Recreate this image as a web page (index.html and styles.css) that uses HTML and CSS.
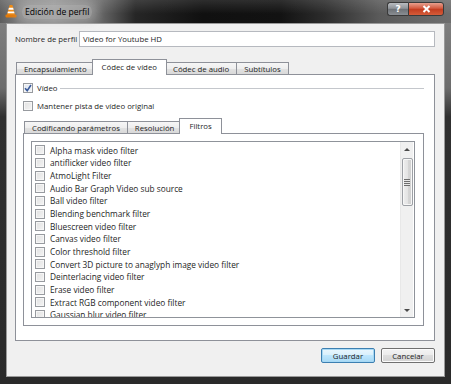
FILE: index.html
```html
<!DOCTYPE html>
<html lang="es">
<head>
<meta charset="utf-8">
<title>Edición de perfil</title>
<link rel="stylesheet" href="styles.css">
</head>
<body>
<div class="window">
  <header class="titlebar">
    <svg class="app-icon" width="12" height="14" viewBox="0 0 12 14">
      <path d="M4.6 1 L7.4 1 L10 11 L2 11 Z" fill="#f28c12"/>
      <path d="M3.9 3.8 L8.1 3.8 L8.6 5.8 L3.4 5.8 Z" fill="#fff"/>
      <path d="M2.9 7.6 L9.1 7.6 L9.5 9.3 L2.5 9.3 Z" fill="#fff"/>
      <rect x="0.5" y="10.4" width="11" height="3.1" rx="1" fill="#e07a0c"/>
    </svg>
    <span class="title">Edición de perfil</span>
    <div class="caption-buttons">
      <span class="cap-btn help">?</span>
      <span class="cap-btn close">
        <svg width="9" height="8" viewBox="0 0 9 8"><path d="M1.5 1 L7.5 7 M7.5 1 L1.5 7" stroke="#fff" stroke-width="2"/></svg>
      </span>
    </div>
  </header>
  <div class="frame">
    <main class="client">
      <div class="name-row">
        <label class="name-label">Nombre de perfil</label>
        <div class="textbox">Video for Youtube HD</div>
      </div>

      <section class="tabs outer">
        <nav class="tabbar">
          <span class="tab">Encapsulamiento</span>
          <span class="tab active">Códec de vídeo</span>
          <span class="tab">Códec de audio</span>
          <span class="tab">Subtítulos</span>
        </nav>
        <div class="pane outer-pane">
          <div class="group-head">
            <span class="checkbox checked"><svg width="8" height="8" viewBox="0 0 8 8"><path d="M1 4.2 L3.2 6.6 L7 1" fill="none" stroke="#3a5a9a" stroke-width="1.6"/></svg></span>
            <span class="check-label">Vídeo</span>
            <span class="group-line"></span>
          </div>
          <div class="check-row">
            <span class="checkbox"></span>
            <span class="check-label">Mantener pista de vídeo original</span>
          </div>

          <section class="tabs inner">
            <nav class="tabbar">
              <span class="tab">Codificando parámetros</span>
              <span class="tab">Resolución</span>
              <span class="tab active">Filtros</span>
            </nav>
            <div class="pane inner-pane">
              <div class="listbox">
                <ul class="items">
                  <li><span class="checkbox"></span>Alpha mask video filter</li>
                  <li><span class="checkbox"></span>antiflicker video filter</li>
                  <li><span class="checkbox"></span>AtmoLight Filter</li>
                  <li><span class="checkbox"></span>Audio Bar Graph Video sub source</li>
                  <li><span class="checkbox"></span>Ball video filter</li>
                  <li><span class="checkbox"></span>Blending benchmark filter</li>
                  <li><span class="checkbox"></span>Bluescreen video filter</li>
                  <li><span class="checkbox"></span>Canvas video filter</li>
                  <li><span class="checkbox"></span>Color threshold filter</li>
                  <li><span class="checkbox"></span>Convert 3D picture to anaglyph image video filter</li>
                  <li><span class="checkbox"></span>Deinterlacing video filter</li>
                  <li><span class="checkbox"></span>Erase video filter</li>
                  <li><span class="checkbox"></span>Extract RGB component video filter</li>
                  <li><span class="checkbox"></span>Gaussian blur video filter</li>
                </ul>
                <div class="scrollbar">
                  <span class="arrow up"></span>
                  <div class="track">
                    <span class="thumb"><span class="grip"></span></span>
                  </div>
                  <span class="arrow down"></span>
                </div>
              </div>
            </div>
          </section>
        </div>
      </section>

      <footer class="buttons">
        <button class="btn default">Guardar</button>
        <button class="btn">Cancelar</button>
      </footer>
    </main>
  </div>
</div>
</body>
</html>
```

FILE: styles.css
```css
* { box-sizing: border-box; }

html, body {
  margin: 0;
  padding: 0;
  background: #1b1b1b;
}

body {
  font-family: "Open Sans", "Noto Sans", sans-serif;
  color: #1e1e1e;
}

.window {
  width: 451px;
  height: 384px;
  display: flex;
  flex-direction: column;
  overflow: hidden;
  background: #2a2a2a;
}

/* ---------- title bar ---------- */
.titlebar {
  height: 23px;
  flex: none;
  display: flex;
  align-items: center;
  padding: 0 0 0 5px;
  background:
    linear-gradient(to bottom, rgba(255,255,255,0.12), rgba(255,255,255,0) 60%),
    linear-gradient(to right, #5e5e5e 0, #7c7c7c 4%, #8a8a8a 12%, #6a6a6a 22%, #262626 30%, #101010 45%, #121212 62%, #2c2c2c 72%, #5a5a5a 84%, #6e6e6e 100%);
  position: relative;
}

.app-icon {
  flex: none;
  margin-top: -1px;
}

.title {
  margin-left: 5px;
  font-size: 8.6px;
  color: #000;
  padding: 1px 3px;
  border-radius: 6px;
  background: rgba(205,205,205,0.45);
  box-shadow: 0 0 8px 5px rgba(205,205,205,0.35);
}

.caption-buttons {
  margin-left: auto;
  align-self: flex-start;
  margin-top: 2px;
  margin-right: 7px;
  display: flex;
}

.cap-btn {
  height: 14px;
  display: flex;
  align-items: center;
  justify-content: center;
  border: 1px solid #3a3a3a;
  color: #fff;
  font-family: "DejaVu Sans", sans-serif;
  font-weight: bold;
  font-size: 9px;
}

.cap-btn.help {
  width: 21px;
  border-radius: 3px 0 0 3px;
  border-right: 0;
  background: linear-gradient(to bottom, #b9bcc0 0, #8f9398 45%, #6d7176 50%, #8a8e93 100%);
}

.cap-btn.close {
  width: 36px;
  border-radius: 0 3px 3px 0;
  background: linear-gradient(to bottom, #e8a08e 0, #d2583e 45%, #c23b1f 50%, #d55c3a 100%);
}

/* ---------- frame & client ---------- */
.frame {
  flex: 1;
  padding: 0 6px 7px;
  background: linear-gradient(to bottom, #7e7e7e 0, #6c6c6c 18%, #303030 26%, #2a2a2a 100%);
  display: flex;
}

.client {
  flex: 1;
  background: #f0f0f0;
  border: 1px solid #9a9a9a;
  display: flex;
  flex-direction: column;
  padding: 7px 8px 0 8px;
  font-size: 7.8px;
}

/* ---------- name row ---------- */
.name-row {
  display: flex;
  align-items: center;
  height: 16px;
}

.name-label {
  width: 64px;
  flex: none;
  padding-left: 0;
}

.textbox {
  flex: 1;
  height: 16px;
  background: #fff;
  border: 1px solid #b6b9bf;
  padding: 0 3px;
  display: flex;
  align-items: center;
  margin-right: 1px;
}

/* ---------- tabs ---------- */
.tabs {
  display: flex;
  flex-direction: column;
}

.tabbar {
  display: flex;
  align-items: flex-end;
  padding-left: 2px;
  position: relative;
  z-index: 1;
}

.tab {
  height: 13px;
  padding: 0 7px;
  border: 1px solid #8e9199;
  border-bottom: 0;
  margin-right: -1px;
  display: flex;
  align-items: center;
  white-space: nowrap;
  background: linear-gradient(to bottom, #f6f6f6 0, #eeeeee 50%, #e2e2e2 51%, #d9d9d9 100%);
}

.tab.active {
  height: 17px;
  margin: 0 -1px -1px -2px;
  padding: 0 9px 1px;
  background: #fff;
  position: relative;
}

.tab.active + .tab {
  border-left: 0;
  margin-left: 0;
}

.pane {
  background: #fff;
  border: 1px solid #8e9199;
}

.outer {
  margin-top: 11px;
  margin-right: 1px;
}

.outer .tabbar {
  height: 16px;
  padding-left: 1px;
}

.outer .tab {
  height: 12px;
}

.outer .tab.active {
  height: 16px;
}

.outer-pane {
  height: 267px;
  padding: 8px 10px 0 7px;
}

/* ---------- group + check rows ---------- */
.group-head,
.check-row {
  display: flex;
  align-items: center;
  height: 10px;
}

.check-row {
  margin-top: 8px;
}

.checkbox {
  width: 10px;
  height: 10px;
  flex: none;
  border: 1px solid #979a9f;
  background: linear-gradient(135deg, #e2e2e2 0, #ececec 60%, #f4f4f4 100%);
  box-shadow: inset 0 0 0 1px #f6f6f6;
  display: inline-flex;
  align-items: center;
  justify-content: center;
}

.checkbox.checked {
  background: linear-gradient(135deg, #dfe7f2 0, #eef2f8 100%);
}

.check-label {
  margin-left: 4px;
}

.group-line {
  flex: 1;
  height: 1px;
  background: #c4c7cc;
  margin-left: 3px;
  margin-right: 0;
}

/* ---------- inner tabs ---------- */
.inner {
  margin-top: 5px;
  margin-right: 0;
}

.inner .tabbar {
  height: 17px;
}

.inner-pane {
  height: 193px;
  padding: 7px 8px 0 7px;
}

.listbox {
  height: 177px;
  border: 1px solid #8f939a;
  background: #fff;
  display: flex;
  overflow: hidden;
}

.items {
  list-style: none;
  margin: 0;
  padding: 2px 0 0 3px;
  flex: 1;
  font-size: 8.3px;
  overflow: hidden;
}

.items li {
  height: 12.67px;
  display: flex;
  align-items: center;
  white-space: nowrap;
}

.items .checkbox {
  margin-right: 5px;
}

/* ---------- scrollbar ---------- */
.scrollbar {
  width: 13px;
  flex: none;
  display: flex;
  flex-direction: column;
  background: #f0f0f0;
  border-left: 1px solid #e8e8e8;
  margin-right: 1px;
}

.arrow {
  height: 14px;
  flex: none;
  display: flex;
  align-items: center;
  justify-content: center;
}

.arrow::before {
  content: "";
  width: 0;
  height: 0;
  border-left: 3px solid transparent;
  border-right: 3px solid transparent;
}

.arrow.up::before { border-bottom: 3px solid #4a4a4a; }
.arrow.down::before { border-top: 3px solid #4a4a4a; }

.track {
  flex: 1;
  padding: 2px 0 0;
}

.thumb {
  display: flex;
  align-items: center;
  justify-content: center;
  height: 48px;
  margin: 0 0.5px;
  border: 1px solid #9da0a5;
  border-radius: 2px;
  background: linear-gradient(to right, #eeeeee 0, #e4e4e4 50%, #d6d6d6 51%, #d0d0d0 100%);
  box-shadow: inset 0 0 0 1px #f7f7f7;
}

.grip {
  width: 6px;
  height: 7px;
  background: repeating-linear-gradient(to bottom, #6d6d6d 0, #6d6d6d 1px, #e6e6e6 1px, #e6e6e6 2px);
}

/* ---------- buttons ---------- */
.buttons {
  display: flex;
  justify-content: flex-end;
  gap: 6px;
  margin-top: 7px;
  margin-right: 1px;
}

.btn {
  font-family: inherit;
  font-size: 7.8px;
  color: #1e1e1e;
  width: 54px;
  height: 15px;
  padding: 0;
  border: 1px solid #707070;
  border-radius: 2px;
  background: linear-gradient(to bottom, #f4f4f4 0, #ececec 45%, #dedede 50%, #d3d3d3 100%);
  box-shadow: inset 0 0 0 1px #fbfbfb;
}

.btn.default {
  border-color: #3c7fb1;
  box-shadow: inset 0 0 0 1px #a6d8f4;
  background: linear-gradient(to bottom, #eaf6fd 0, #d9f0fc 45%, #bee6fd 50%, #a7d9f5 100%);
}
```
